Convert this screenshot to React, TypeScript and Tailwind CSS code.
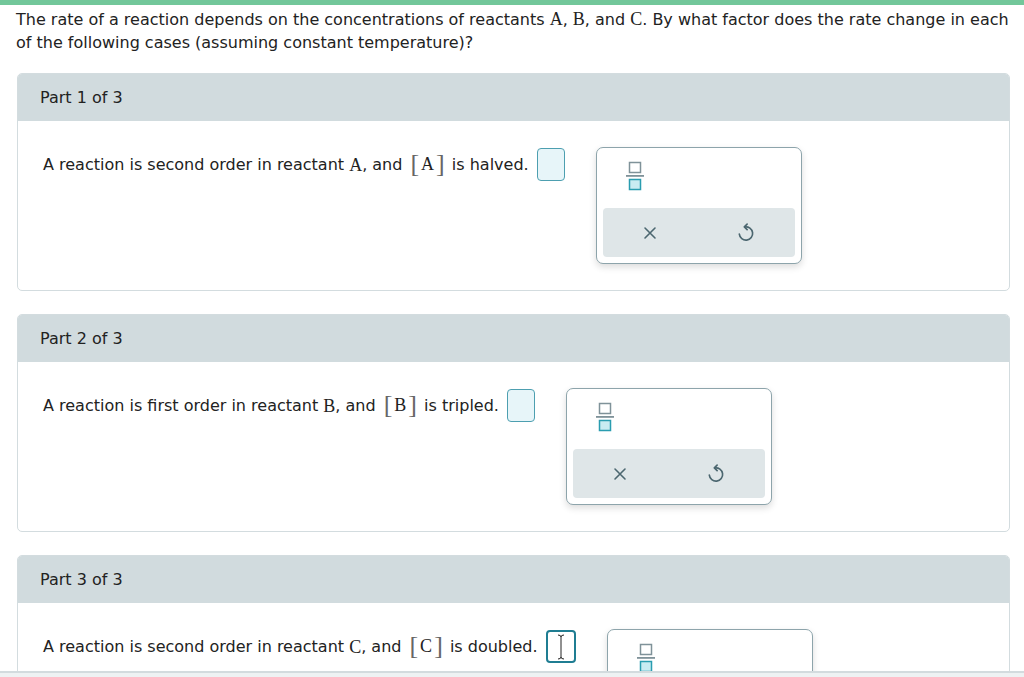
import React from "react";

function MathVar({ v }: { v: string }) {
  return <span className="font-['Liberation_Serif'] text-[18px] leading-none">{v}</span>;
}

function Bracketed({ v }: { v: string }) {
  return (
    <span className="inline-flex items-center ml-[8px] mr-[2px] relative top-[-1px]">
      <span className="font-['Liberation_Serif'] text-[26px] leading-none text-[#666]">[</span>
      <span className="font-['Liberation_Serif'] text-[18px] leading-none px-[2px]">{v}</span>
      <span className="font-['Liberation_Serif'] text-[26px] leading-none text-[#666]">]</span>
    </span>
  );
}

function FractionIcon() {
  return (
    <svg width="20" height="32" viewBox="0 0 20 32">
      <rect x="4.5" y="3.5" width="11" height="10" fill="#fff" stroke="#7f9299" strokeWidth="1.5" />
      <rect x="1" y="16" width="18" height="1.8" fill="#7f9299" />
      <rect x="4.5" y="20.5" width="11" height="10" fill="#c9ecf2" stroke="#2a9db0" strokeWidth="1.5" />
    </svg>
  );
}

function XIcon() {
  return (
    <svg width="14" height="14" viewBox="0 0 14 14">
      <path d="M2 2 L12 12 M12 2 L2 12" stroke="#4c6770" strokeWidth="1.6" strokeLinecap="round" />
    </svg>
  );
}

function UndoIcon() {
  return (
    <svg width="18" height="20" viewBox="0 0 16 18">
      <path d="M7 3.5 A6 6 0 1 1 2 10" fill="none" stroke="#4c6770" strokeWidth="1.5" strokeLinecap="round" />
      <path d="M9 1 L6.5 3.5 L9 6" fill="none" stroke="#4c6770" strokeWidth="1.5" strokeLinecap="round" strokeLinejoin="round" />
    </svg>
  );
}

function Popup() {
  return (
    <div className="w-[206px] h-[117px] shrink-0 rounded-[7px] border border-[#8da4ab] bg-white shadow-[0_3px_7px_rgba(0,0,0,0.14)] flex flex-col px-[6px] pb-[6px]">
      <div className="h-[60px] flex items-start pl-[22px] pt-[11px]">
        <FractionIcon />
      </div>
      <div className="flex-1 rounded-[4px] bg-[#dfe6e8] flex items-center justify-around">
        <XIcon />
        <UndoIcon />
      </div>
    </div>
  );
}

function AnswerBox({ focused }: { focused?: boolean }) {
  if (focused) {
    return (
      <div className="w-[30px] h-[33px] rounded-[4px] border-2 border-[#1f7d92] bg-white flex items-center justify-center">
        <svg width="8" height="26" viewBox="0 0 8 26">
          <path d="M1 1 Q4 1 4 3 Q4 1 7 1 M4 3 L4 23 M1 25 Q4 25 4 23 Q4 25 7 25" fill="none" stroke="#222" strokeWidth="1" />
        </svg>
      </div>
    );
  }
  return <div className="w-[28px] h-[33px] rounded-[4px] border-[1.5px] border-[#4d9fb0] bg-[#e7f5f9]" />;
}

function Card({
  part,
  pre,
  v,
  post,
  focused,
}: {
  part: number;
  pre: string;
  v: string;
  post: string;
  focused?: boolean;
}) {
  return (
    <div className="rounded-[5px] border border-[#d3dcdf] overflow-hidden bg-white">
      <div className="h-[47px] bg-[#d1dbde] flex items-center pl-[22px] text-[16px] text-[#222]">
        Part {part} of 3
      </div>
      <div className="pl-[25px] pt-[26px] pb-[26px] flex items-start">
        <div className="flex items-center h-[35px] text-[16px] text-[#222] whitespace-nowrap">
          <span>{pre}&nbsp;</span>
          <MathVar v={v} />
          <span>, and</span>
          <Bracketed v={v} />
          <span>&nbsp;{post}</span>
          <span className="ml-[8px]">
            <AnswerBox focused={focused} />
          </span>
        </div>
        <div className="ml-[31px]">
          <Popup />
        </div>
      </div>
    </div>
  );
}

export default function App() {
  return (
    <div className="h-[677px] w-[1024px] overflow-hidden bg-white font-['DejaVu_Sans',sans-serif] text-[#222] relative">
      <div className="h-[5px] bg-[#72c79a]" />
      <p className="pl-4 pr-2 pt-[3px] text-[16px] leading-[23px]">
        The rate of a reaction depends on the concentrations of reactants{" "}
        <MathVar v="A" />, <MathVar v="B" />, and <MathVar v="C" />. By what factor does the rate change in each of the following cases (assuming constant temperature)?
      </p>
      <div className="ml-[17px] mr-[14px] mt-[19px] flex flex-col gap-[23px]">
        <Card part={1} pre="A reaction is second order in reactant" v="A" post="is halved." />
        <Card part={2} pre="A reaction is first order in reactant" v="B" post="is tripled." />
        <Card part={3} pre="A reaction is second order in reactant" v="C" post="is doubled." focused />
      </div>
      <div className="absolute bottom-0 left-0 right-0 h-[6px] border-t-2 border-[#d3dbde] bg-[#eef2f3]" />
    </div>
  );
}
